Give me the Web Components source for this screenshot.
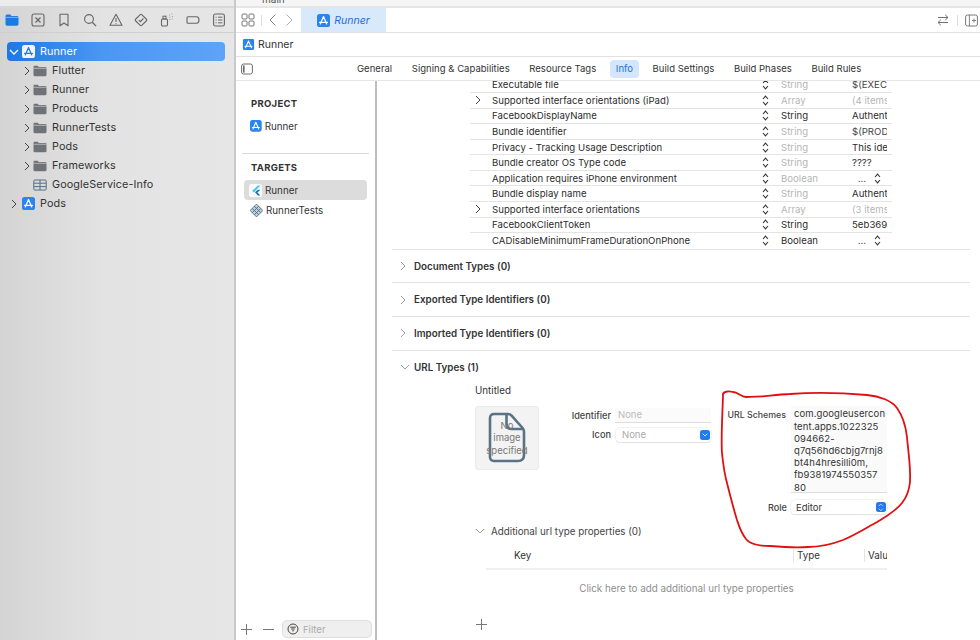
<!DOCTYPE html>
<html><head><meta charset="utf-8"><title>Runner</title>
<style>
html,body{margin:0;padding:0;background:#fff;overflow:hidden}
body{font:10.5px Inter,"Liberation Sans",sans-serif;color:#2b2b2b;-webkit-font-smoothing:antialiased}
</style></head><body>
<x-app>
  <x-navigator slot="nav">
    <x-tree-row level="0" open selected icon="appsel">Runner</x-tree-row>
    <x-tree-row level="1" closed icon="folder">Flutter</x-tree-row>
    <x-tree-row level="1" closed icon="folder">Runner</x-tree-row>
    <x-tree-row level="1" closed icon="folder">Products</x-tree-row>
    <x-tree-row level="1" closed icon="folder">RunnerTests</x-tree-row>
    <x-tree-row level="1" closed icon="folder">Pods</x-tree-row>
    <x-tree-row level="1" closed icon="folder">Frameworks</x-tree-row>
    <x-tree-row level="1" icon="table">GoogleService-Info</x-tree-row>
    <x-tree-row level="0" closed icon="app">Pods</x-tree-row>
  </x-navigator>
  <x-editor-bar slot="bar"></x-editor-bar>
  <x-tab-bar slot="tabs">
    <x-tab>General</x-tab><x-tab>Signing &amp; Capabilities</x-tab><x-tab>Resource Tags</x-tab><x-tab active>Info</x-tab><x-tab>Build Settings</x-tab><x-tab>Build Phases</x-tab><x-tab>Build Rules</x-tab>
  </x-tab-bar>
  <x-targets slot="targets"></x-targets>
  <x-info-pane slot="pane">
    <x-plist>
      <x-plist-row type="String" value="$(EXECUTABLE_NAME)" dim>Executable file</x-plist-row>
      <x-plist-row type="Array" value="(4 items)" dim expand>Supported interface orientations (iPad)</x-plist-row>
      <x-plist-row type="String" value="Authenticator">FacebookDisplayName</x-plist-row>
      <x-plist-row type="String" value="$(PRODUCT_BUNDLE_IDENTIFIER)" dim>Bundle identifier</x-plist-row>
      <x-plist-row type="String" value="This identifier" dim darkval>Privacy - Tracking Usage Description</x-plist-row>
      <x-plist-row type="String" value="????" dim darkval>Bundle creator OS Type code</x-plist-row>
      <x-plist-row type="Boolean" value="…" dim stepper>Application requires iPhone environment</x-plist-row>
      <x-plist-row type="String" value="Authenticator" dim darkval>Bundle display name</x-plist-row>
      <x-plist-row type="Array" value="(3 items)" dim expand>Supported interface orientations</x-plist-row>
      <x-plist-row type="String" value="5eb3695b2c">FacebookClientToken</x-plist-row>
      <x-plist-row type="Boolean" value="…" stepper last>CADisableMinimumFrameDurationOnPhone</x-plist-row>
    </x-plist>
    <x-section>Document Types (0)</x-section>
    <x-section>Exported Type Identifiers (0)</x-section>
    <x-section>Imported Type Identifiers (0)</x-section>
    <x-section open>URL Types (1)</x-section>
    <x-url-type></x-url-type>
    <x-additional></x-additional>
  </x-info-pane>
</x-app>
<script>
const ICONS={
 folderblue:[14,12,'<path d="M.5 2.2C.5 1.2 1.2.6 2.2.6h3l1.3 1.3h5.4c1 0 1.6.7 1.6 1.6v6.6c0 1-.7 1.6-1.6 1.6H2.1c-1 0-1.6-.7-1.6-1.6z" fill="#1a7be8"/><path d="M.5 3.4h13" stroke="#bcd9f7" stroke-width=".6"/>'],
 xsq:[14,14,'<rect x="1" y="1" width="12" height="12" rx="2" fill="none" stroke="#666" stroke-width="1.1"/><path d="M4.5 4.5l5 5M9.5 4.5l-5 5" stroke="#666" stroke-width="1.2"/>'],
 bookmark:[14,14,'<path d="M3 1.2h8v11.6L7 10 3 12.8z" fill="none" stroke="#666" stroke-width="1.1" stroke-linejoin="round"/>'],
 search:[14,14,'<circle cx="6" cy="6" r="4.4" fill="none" stroke="#666" stroke-width="1.1"/><path d="M9.3 9.3l3.8 3.8" stroke="#666" stroke-width="1.3"/>'],
 warn:[14,14,'<path d="M7 1.3L13 12.3H1z" fill="none" stroke="#666" stroke-width="1.1" stroke-linejoin="round"/><path d="M7 5v4M7 10.2v1" stroke="#666" stroke-width="1.1"/>'],
 diamond:[14,14,'<rect x="2.6" y="2.6" width="8.8" height="8.8" rx="1.4" transform="rotate(45 7 7)" fill="none" stroke="#666" stroke-width="1.1"/><path d="M4.8 7.2l1.6 1.5 3-3.2" fill="none" stroke="#666" stroke-width="1.1"/>'],
 spray:[14,14,'<rect x="1.5" y="6" width="6" height="7" rx="1.2" fill="none" stroke="#666" stroke-width="1.1"/><rect x="3" y="3.2" width="3" height="2.8" fill="none" stroke="#666" stroke-width="1"/><path d="M9 2h.8M11.5 1h.8M9.5 4.2h.8M12 3.5h.8M11.8 6h.8M9.5 6.5h.8" stroke="#888" stroke-width=".9"/>'],
 tag:[14,14,'<path d="M1 4.800c0-.6.4-1 1-1h8.500c1.500 0 2.500 1.200 2.500 3.200s-1 3.200-2.500 3.200H2c-.6 0-1-.4-1-1z" fill="none" stroke="#666" stroke-width="1.100"/>'],
 list:[14,14,'<rect x="1.6" y="1" width="10.8" height="12" rx="1.8" fill="none" stroke="#666" stroke-width="1.1"/><path d="M3.6 4.2h1M6 4.2h4.4M3.6 7h1M6 7h4.4M3.6 9.8h1M6 9.8h4.4" stroke="#666" stroke-width="1"/>'],
 folder:[14,12,'<path d="M.5 2C.5 1.2 1 .8 1.7.8h3l1.2 1.1h6.4c.7 0 1.2.5 1.2 1.2v7c0 .7-.5 1.2-1.2 1.2H1.7c-.7 0-1.2-.5-1.2-1.2z" fill="#6f7377"/><path d="M.5 3.3h13" stroke="#dfe0e1" stroke-width=".6"/>'],
 table:[14,12,'<rect x=".8" y="1" width="12.4" height="10" rx="1" fill="none" stroke="#53708a" stroke-width="1"/><path d="M.8 4.2h12.4M.8 7.6h12.4M7 1v10" stroke="#53708a" stroke-width="1"/>'],
 app:[13,13,'<rect width="13" height="13" rx="2.6" fill="#2a84ee"/><path d="M6.5 2.6L3.3 10M6.5 2.6L9.7 10M2.6 8.4h7.8" stroke="#fff" stroke-width="1.2" fill="none" stroke-linecap="round"/>'],
 appsel:[13,13,'<rect width="13" height="13" rx="2.6" fill="#f2f6fc"/><path d="M6.5 2.6L3.3 10M6.5 2.6L9.7 10M2.6 8.4h7.8" stroke="#2a78e0" stroke-width="1.2" fill="none" stroke-linecap="round"/>'],
 flutter:[13,13,'<rect width="13" height="13" rx="2.6" fill="#fafafa"/><path d="M8.8 1.6L3.2 6.9l1.6 1.5 6.6-6.8z" fill="#45c3f5"/><path d="M6 8.2l2.8-2.5h2.6L8.4 8.6l3 3H8.8z" fill="#1b6fc9"/>'],
 tests:[13,13,'<g transform="rotate(45 6.5 6.5)" fill="none" stroke="#4f6d83" stroke-width=".9"><rect x="2" y="2" width="9" height="9" fill="#c5d2dc"/><path d="M5 2v9M8 2v9M2 5h9M2 8h9"/></g>'],
 grid:[14,14,'<rect x="1" y="1" width="5" height="5" rx="1" fill="none" stroke="#777"/><rect x="8" y="1" width="5" height="5" rx="1" fill="none" stroke="#777"/><rect x="1" y="8" width="5" height="5" rx="1" fill="none" stroke="#777"/><rect x="8" y="8" width="5" height="5" rx="1" fill="none" stroke="#777"/>'],
 back:[9,14,'<path d="M7.5 1.5L2 7l5.5 5.5" fill="none" stroke="#8c8c8c"/>'],
 fwd:[9,14,'<path d="M1.5 1.5L7 7l-5.5 5.5" fill="none" stroke="#b0b0b0"/>'],
 swap:[14,14,'<path d="M2 4.5h10M9.2 1.8L12 4.5 9.2 7.2M12 9.5H2M4.8 6.8L2 9.5l2.8 2.7" fill="none" stroke="#6f6f6f"/>'],
 insp:[13,13,'<rect x=".6" y="1" width="11.8" height="11" rx="2" fill="none" stroke="#777"/><path d="M4.4 1v11M7 6.5h4M9 4.5v4" stroke="#777" stroke-width=".9"/>'],
 side:[12,12,'<rect x=".6" y="1" width="10.8" height="10" rx="2" fill="none" stroke="#6c6c6c"/><rect x="2" y="2.4" width="1.6" height="7.2" fill="#6c6c6c"/>'],
 right:[6,10,'<path d="M1 1l4 4-4 4" fill="none" stroke="#444" stroke-width="1"/>'],
 down:[10,6,'<path d="M1 1l4 4 4-4" fill="none" stroke="#fff" stroke-width="1.3"/>'],
 downgray:[10,6,'<path d="M1 1l4 4 4-4" fill="none" stroke="#9a9a9a" stroke-width="1"/>'],
 rightgray:[6,10,'<path d="M1 1l4 4-4 4" fill="none" stroke="#9a9a9a" stroke-width="1"/>'],
 stepper:[7,11,'<path d="M1 4l2.5-2.8L6 4M1 7l2.5 2.8L6 7" fill="none" stroke="#333" stroke-width="1.1"/>'],
 plus:[13,13,'<path d="M6.5 1v11M1 6.5h11" stroke="#777" stroke-width="1"/>'],
 minus:[13,13,'<path d="M1 6.5h11" stroke="#777" stroke-width="1"/>'],
 filter:[12,12,'<circle cx="6" cy="6" r="5" fill="none" stroke="#444" stroke-width="1"/><path d="M3.2 4.2h5.6M4.2 6h3.6M5.2 7.8h1.6" stroke="#444" stroke-width="1"/>'],
 doc:[38,52,'<path d="M6 2h14c1.5 0 2.6.5 3.6 1.6L34.6 16c.9 1 1.4 2 1.4 3.4V43c0 4-2.2 6-6 6H6c-2.5 0-4-1.5-4-4V6c0-2.5 1.5-4 4-4z" fill="none" stroke="#5a7284" stroke-width="2.6"/><path d="M18.500 2.500V12c0 3 1.500 5 5 5h12" fill="none" stroke="#5a7284" stroke-width="2.600"/>']
};
function def(name,css,html,init){
  customElements.define(name,class extends HTMLElement{
    constructor(){super();this.attachShadow({mode:'open'})}
    connectedCallback(){
      const h=typeof html==='function'?html(this):html;
      this.shadowRoot.innerHTML='<style>'+css+'</style>'+h;
      if(init)init(this);
    }
  });
}
const ic=(n,extra)=>`<x-icon name="${n}"${extra?' '+extra:''}></x-icon>`;
def('x-icon',':host{display:inline-flex;flex:none;line-height:0}',el=>{
  const [w,h,p]=ICONS[el.getAttribute('name')];
  const s=parseFloat(el.getAttribute('scale')||1);
  return `<svg width="${w*s}" height="${h*s}" viewBox="0 0 ${w} ${h}">${p}</svg>`;
});
def('x-app',`
:host{display:grid;grid-template-columns:236px 141px 1fr;grid-template-rows:81px 1fr;width:980px;height:640px;overflow:hidden;background:#fff}
.nav{grid-row:1/3;grid-column:1;border-right:2px solid #c9c9c9;box-sizing:border-box;min-height:0}
.head{grid-column:2/4;grid-row:1;display:flex;flex-direction:column;min-width:0}
.targets{grid-column:2;grid-row:2;border-right:2px solid #bdbdbd;min-height:0;display:flex}
.pane{grid-column:3;grid-row:2;min-height:0;min-width:0;overflow:hidden}
`,`<div class="nav"><slot name="nav"></slot></div>
<div class="head"><slot name="bar"></slot><slot name="tabs"></slot></div>
<div class="targets"><slot name="targets"></slot></div>
<div class="pane"><slot name="pane"></slot></div>`);
def('x-navigator',`
:host{display:flex;flex-direction:column;height:100%;background:linear-gradient(90deg,#d4d4d4,#e3e3e3 45%,#e6e6e6);font-size:10.8px}
.strip{height:6px;background:#ececec;border-bottom:2px solid #d8d8d8}
.tools{height:24px;display:flex;align-items:center;justify-content:space-between;padding:0 8px 0 5px;border-bottom:1px solid #cfcfcf}
.list{padding-top:9px;display:flex;flex-direction:column}
`,`<div class="strip"></div><div class="tools">${['folderblue','xsq','bookmark','search','warn','diamond','spray','tag','list'].map(n=>ic(n)).join('')}</div><div class="list"><slot></slot></div>`);
def('x-tree-row',`
:host{display:block;height:19px}
.r{height:19px;display:flex;align-items:center;box-sizing:border-box;color:#333;letter-spacing:.1px}
:host([selected]) .r{background:linear-gradient(90deg,#1e78e3,#4c97f4 45%,#5ea3f7);border-radius:4px;margin:0 9px 0 7px;color:#fff}
.c{width:10px;display:flex;justify-content:center;flex:none}
.i{margin-right:5px;display:flex}
`,el=>{
  const l=+el.getAttribute('level');const sel=el.hasAttribute('selected');
  const pad=l?22:(sel?2:9);
  let c='';
  if(el.hasAttribute('open'))c=ic('down');
  if(el.hasAttribute('closed'))c=ic('right');
  return `<div class="r" style="padding-left:${pad}px"><span class="c" style="margin-right:${l?1:3}px">${c}</span><span class="i">${ic(el.getAttribute('icon'))}</span><slot></slot></div>`;
});
def('x-editor-bar',`
:host{display:block}
.top{height:6px;background:#f5f5f5;border-bottom:2px solid #e6e6e6;overflow:hidden;font-size:10px;color:#555;padding-left:26px;line-height:8px;box-sizing:content-box}
.top span{display:block;margin-top:-5px}
.r1{height:24px;display:flex;align-items:center;border-bottom:1px solid #e2e2e2}
.l{display:flex;align-items:center;width:65px;box-sizing:border-box;padding-left:5px}
.sep{width:1px;height:11px;background:#ddd;margin:0 6px}
.tab{width:85px;height:100%;background:#d8e9fb;display:flex;align-items:center;justify-content:center;gap:4px;color:#1b6fd8;font-style:italic;font-size:10.5px}
.sp{flex:1}
.rr{display:flex;align-items:center;padding-right:2px}
.r2{height:23px;display:flex;align-items:center;gap:3px;padding-left:6px;border-bottom:1px solid #e2e2e2;font-size:10.5px;color:#333}
`,`<div class="top"><span>main</span></div>
<div class="r1"><div class="l">${ic('grid')}<span class="sep"></span>${ic('back')}<span style="width:8px"></span>${ic('fwd')}</div><div class="tab">${ic('app')}<span>Runner</span></div><div class="sp"></div><div class="rr">${ic('swap')}<span class="sep" style="margin:0 7px"></span>${ic('insp')}</div></div>
<div class="r2">${ic('app','style="transform:scale(.9)"')}<span>Runner</span></div>`);
def('x-tab-bar',`
:host{display:flex;align-items:center;height:25px;border-bottom:1px solid #e6e6e6;box-sizing:border-box;padding:1px 0 0 5px}
.t{display:flex;align-items:center;gap:7.6px;margin-left:98px}
`,`${ic('side')}<div class="t"><slot></slot></div>`);
def('x-tab',`
:host{display:block;padding:0 6px;height:18px;line-height:18px;font-size:9.500px;color:#333;border-radius:4px;letter-spacing:.03px;white-space:nowrap}
:host([active]){background:#d3e6fb;color:#1672e0}
`,`<slot></slot>`);
def('x-targets',`
:host{display:flex;flex-direction:column;flex:1;min-width:0;font-size:9.800px;color:#333}
.h{font-weight:700;font-size:9.500px;letter-spacing:.3px;padding-left:15px;color:#333}
.row{display:flex;align-items:center;gap:3px;height:20px;padding-left:14px}
.sel{background:#dcdcdc;border-radius:4px;margin:0 8px;padding-left:5px}
.rule{height:1px;background:#d9d9d9;margin:17px 6px 0}
.bot{margin-top:auto;height:20px;display:flex;align-items:center;padding:0 3px 1px 4px;gap:9px}
.f{flex:1;height:18px;background:#efefef;border:1px solid #dedede;border-radius:5px;display:flex;align-items:center;gap:4px;padding-left:4px;color:#aaa;box-sizing:border-box;font-size:9.500px;margin-left:-2px}
`,`<div class="h" style="margin-top:17px">PROJECT</div>
<div class="row" style="margin-top:7px">${ic('app','scale=".9"')}<span>Runner</span></div>
<div class="rule"></div>
<div class="h" style="margin-top:8px">TARGETS</div>
<div class="row sel" style="margin-top:7px">${ic('flutter')}<span>Runner</span></div>
<div class="row">${ic('tests')}<span>RunnerTests</span></div>
<div class="bot">${ic('plus')}${ic('minus')}<div class="f">${ic('filter')}<span>Filter</span></div></div>`);
def('x-info-pane',`
:host{display:block;height:100%;padding-left:15px;padding-right:10px;box-sizing:border-box;overflow:hidden;position:relative}
`,`<slot></slot>`);
def('x-plist',`
:host{display:block;margin:-3.5px 78px 0 78px;padding-bottom:0}
`,`<slot></slot>`);
def('x-plist-row',`
:host{display:grid;grid-template-columns:22px 269.5px 19.5px 71px 35px;height:15.57px;align-items:center;font-size:9.600px;color:#2c2c2c;border-bottom:1px solid #e4e4e4;box-sizing:border-box;padding-right:5px;letter-spacing:.03px}
:host([last]){border-bottom:0}
.d{display:flex;justify-content:flex-start;padding-left:5px}
.k{white-space:nowrap;overflow:hidden}
.s{display:flex}
.ty,.v{white-space:nowrap;overflow:hidden}
.v{font-size:9.600px}
.muted{color:#b5b5b5}
.vs{display:flex;justify-content:center;align-items:center;gap:8px;color:#555}
`,el=>{
  const dim=el.hasAttribute('dim');
  const dv=el.hasAttribute('darkval');
  const t=el.getAttribute('type'),v=el.getAttribute('value');
  const val=el.hasAttribute('stepper')?`<div class="vs"><span>${v}</span>${ic('stepper')}</div>`:`<div class="v ${dim&&!dv&&t==='Array'?'muted':''}" style="${dim&&!dv&&t!=='Array'?'color:#444':''}">${v}</div>`;
  return `<div class="d">${el.hasAttribute('expand')?ic('right'):''}</div><div class="k"><slot></slot></div><div class="s">${ic('stepper')}</div><div class="ty ${dim?'muted':''}">${t}</div>${val}`;
});
def('x-section',`
:host{display:flex;align-items:center;height:33.7px;border-top:1px solid #e2e2e2;box-sizing:border-box;font-weight:600;font-size:9.800px;color:#333;letter-spacing:.02px}
.c{width:22px;padding-left:8px;box-sizing:border-box;display:flex;align-items:center}
`,el=>`<span class="c">${ic(el.hasAttribute('open')?'downgray':'rightgray')}</span><slot></slot>`);
def('x-url-type',`
:host{display:grid;grid-template-columns:64px 76px 96px 80px 96px;grid-template-rows:auto auto auto;column-gap:0;margin-left:83px;font-size:9.500px;color:#333;position:relative}
.t{grid-column:1/6;height:17px;line-height:16px;font-size:9.800px;margin:0 0 6px 0}
.img{grid-column:1;grid-row:2/4;width:64px;height:64px;background:#f3f3f3;border:1px solid #ebebeb;border-radius:3px;box-sizing:border-box;position:relative;display:flex;align-items:center;justify-content:center}
.img .tx{position:relative;text-align:center;font-size:9.500px;line-height:12.400px;color:#777;width:62px}
.img x-icon{position:absolute;left:12px;top:5px}
.lab{font-weight:500;text-align:right;padding-right:4px;box-sizing:border-box;color:#444;font-size:9.200px}
.fields{grid-column:2/4;grid-row:2;display:grid;grid-template-columns:76px 96px;grid-auto-rows:19px;align-items:center;margin-top:0}
.field{height:15px;background:#fbfbfb;border-bottom:1px solid #ddd;color:#bbb;padding-left:3px;line-height:14px;box-sizing:border-box;font-size:9.500px}
.pop{height:14px;background:#fff;border-radius:4px;box-shadow:0 0 0 .5px #e5e5e5,0 1px 1px #ddd;display:flex;align-items:center;position:relative;padding-left:5px;font-size:9.500px}
.btn{position:absolute;right:1px;top:2px;width:10px;height:10px;background:#1f7bf0;border-radius:2.500px;display:flex;align-items:center;justify-content:center}
.right{grid-column:4/6;grid-row:2/4;display:grid;grid-template-columns:80px 96px;align-items:start}
.url{font-size:8.800px;padding-right:5px}
.text{background:#fafafa;border-bottom:1px solid #ddd;height:87px;box-sizing:border-box;padding:2px 1px 0 3px;font-size:9.500px;line-height:12.200px;color:#333;white-space:nowrap;overflow:hidden;letter-spacing:.1px}
.role{margin-top:7px}
`,`<div class="t">Untitled</div>
<div class="img">${ic('doc')}<div class="tx">No<br>image<br>specified</div></div>
<div class="fields"><div class="lab">Identifier</div><div class="field">None</div><div class="lab">Icon</div><div class="pop" style="color:#aaa;margin-left:1px;padding-left:6px">None<span class="btn">${ic('down','scale=".6"')}</span></div></div>
<div class="right"><div class="lab url" style="padding-top:3px">URL Schemes</div><div class="text">com.googleusercon<br>tent.apps.1022325<br>094662-<br>q7q56hd6cbjg7rnj8<br>bt4h4hresilli0m,<br>fb9381974550357<br>80</div>
<div class="lab role" style="padding-top:2px;padding-right:4px">Role</div><div class="pop role">Editor<span class="btn">${ic('stepper','style="filter:invert(1)" scale=".8"')}</span></div></div>`);
def('x-additional',`
:host{display:block;font-size:9.800px;color:#333;margin-top:0}
.h{margin:10px 0 0 83px;display:flex;align-items:center;height:14px;gap:6px;font-weight:400;color:#444}
.cols{margin:11px 83px 0 94px;display:grid;grid-template-columns:307px 71px 23px;height:19px;border-bottom:2px solid #efefef;align-items:start;line-height:13px;overflow:hidden;color:#333}
.cols span{padding-left:28px;overflow:hidden;white-space:nowrap}
.cols span+span{padding-left:3px;border-left:1px solid #e4e4e4;height:13px}
.e{margin:12px 83px 0 94px;text-align:center;color:#8e8e8e;line-height:13px}
.add{margin:23px 0 0 83px;display:flex}
`,`<div class="h">${ic('downgray')}<span>Additional url type properties (0)</span></div>
<div class="cols"><span>Key</span><span>Type</span><span>Value</span></div>
<div class="e">Click here to add additional url type properties</div>
<div class="add">${ic('plus')}</div>
<x-annotation></x-annotation>`);
def('x-annotation',`
:host{position:fixed;left:0;top:0;width:980px;height:640px;pointer-events:none;display:block}
`,`<svg width="980" height="640" viewBox="0 0 980 640"><path d="M723 396C722 391 729 391 733 392C738 392 741 397 746 397C760 397 772 395 790 394C815 392 845 393 867 395C880 396 892 401 897 408C904 418 906 428 907 437C908 450 911 468 910 482C909 492 906 498 902 503C895 512 885 517 877 522C866 528 855 535 843 540C830 545 820 547 808 547C795 548 782 547 770 546C760 546 750 544 746 539C741 533 739 526 737 520C733 507 730 495 727 483C724 472 723 463 722 453C721 440 722 425 723 396Z" fill="none" stroke="#e01010" stroke-width="1.800"/></svg>`);
</script>
</body></html>
